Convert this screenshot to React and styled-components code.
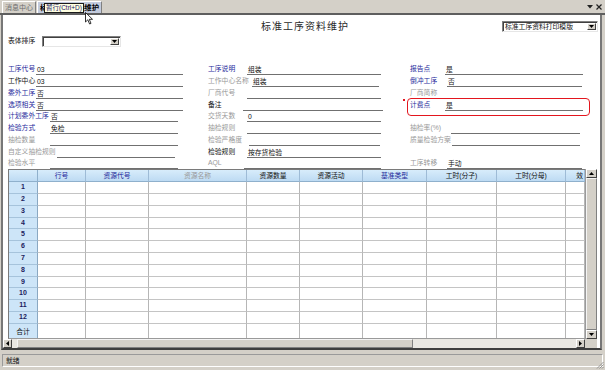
import styled, { createGlobalStyle } from 'styled-components';

const GlobalStyle = createGlobalStyle`
  html, body {
    margin: 0;
    padding: 0;
    background: #d4d0c8;
  }

  body {
    font-family: "Liberation Sans", "Noto Sans CJK SC", sans-serif;
  }

  * {
    box-sizing: border-box;
  }
`;

const toneColors = {
  blue: '#1f2a9c',
  black: '#111111',
  gray: '#999999',
};

// off = distance from column start to the underline, w = underline width
const leftFields = [
  { label: '工序代号', tone: 'blue', value: '03', off: 28, w: 147 },
  { label: '工作中心', tone: 'black', value: '03', off: 28, w: 147 },
  { label: '委外工序', tone: 'blue', value: '否', off: 28, w: 147 },
  { label: '选项相关', tone: 'blue', value: '否', off: 28, w: 147 },
  { label: '计划委外工序', tone: 'blue', value: '否', off: 42, w: 128 },
  { label: '检验方式', tone: 'blue', value: '免检', off: 42, w: 128 },
  { label: '抽检数量', tone: 'gray', value: '', off: 42, w: 128 },
  { label: '自定义抽检规则', tone: 'gray', value: '', off: 49, w: 118 },
  { label: '检验水平', tone: 'gray', value: '', off: 42, w: 128 },
];

const middleFields = [
  { label: '工序说明', tone: 'blue', value: '组装', off: 39, w: 134 },
  { label: '工作中心名称', tone: 'gray', value: '组装', off: 44, w: 127 },
  { label: '厂商代号', tone: 'gray', value: '', off: 39, w: 134 },
  { label: '备注', tone: 'black', value: '', off: 35, w: 140 },
  { label: '交货天数', tone: 'gray', value: '0', off: 39, w: 134 },
  { label: '抽检规则', tone: 'gray', value: '', off: 39, w: 134 },
  { label: '检验严格度', tone: 'gray', value: '', off: 41, w: 131 },
  { label: '检验规则', tone: 'black', value: '按存货检验', off: 39, w: 134 },
  { label: 'AQL', tone: 'gray', value: '', off: 36, w: 137 },
];

const rightFields = [
  { label: '报告点', tone: 'blue', value: '是', off: 35, w: 138 },
  { label: '倒冲工序', tone: 'blue', value: '否', off: 37, w: 135 },
  { label: '厂商简称', tone: 'gray', value: '', off: 38, w: 134 },
  { label: '计费点', tone: 'blue', value: '是', off: 35, w: 138 },
  null,
  { label: '抽检率(%)', tone: 'gray', value: '', off: 41, w: 129 },
  { label: '质量检验方案', tone: 'gray', value: '', off: 42, w: 128 },
  null,
  { label: '工序转移', tone: 'gray', value: '手动', off: 37, w: 135 },
];

const columns = [
  { title: '行号', tone: 'blue', w: 48 },
  { title: '资源代号', tone: 'blue', w: 63 },
  { title: '资源名称', tone: 'gray', w: 98 },
  { title: '资源数量', tone: 'black', w: 53 },
  { title: '资源活动', tone: 'black', w: 63 },
  { title: '基准类型', tone: 'blue', w: 64 },
  { title: '工时(分子)', tone: 'black', w: 70 },
  { title: '工时(分母)', tone: 'black', w: 69 },
  { title: '效', tone: 'black', w: 19, edge: true },
];

const gridTemplate = `29px ${columns.map((c) => `${c.w}px`).join(' ')}`;
const rowNumbers = Array.from({ length: 12 }, (_, i) => i + 1);

const App = () => {
  const renderTabs = () => (
    <TabBar>
      <Tab>消息中心</Tab>
      <Tab $active>
        标准工序资料维护
        <Tooltip>暂行(Ctrl+D)</Tooltip>
      </Tab>
      <Cursor viewBox="0 0 9 13">
        <path d="M0.5 0.5 L0.5 10 L2.8 7.8 L4.6 12 L6 11.4 L4.3 7.3 L7.5 7.3 Z" fill="#fff" stroke="#000" strokeWidth="0.8" />
      </Cursor>
      <TabTools>
        <svg width="6" height="4" viewBox="0 0 6 4"><path d="M0 0 H6 L3 3.5 Z" fill="#222" /></svg>
        <svg width="6" height="6" viewBox="0 0 6 6"><path d="M0.5 0.5 L5.5 5.5 M5.5 0.5 L0.5 5.5" stroke="#222" strokeWidth="1.2" /></svg>
      </TabTools>
    </TabBar>
  );

  const renderCombo = (text, width) => (
    <Combo $w={width}>
      <ComboText>{text}</ComboText>
      <ComboButton>
        <svg width="5" height="3" viewBox="0 0 5 3"><path d="M0 0 H5 L2.5 3 Z" fill="#000" /></svg>
      </ComboButton>
    </Combo>
  );

  const renderHeader = () => (
    <Header>
      <TitleRow>
        <span />
        <Title>标准工序资料维护</Title>
        <PrintSlot>{renderCombo('标准工序资料打印模版', 96)}</PrintSlot>
      </TitleRow>
      <SortRow>
        <FieldLabel $tone="black">表体排序</FieldLabel>
        {renderCombo('', 79)}
      </SortRow>
    </Header>
  );

  const renderField = (field, i) => {
    if (!field) return <Blank key={`blank-${i}`} />;
    return (
      <Field key={field.label} $off={field.off} $w={field.w}>
        <FieldLabel $tone={field.tone}>{field.label}</FieldLabel>
        <FieldValue>{field.value}</FieldValue>
      </Field>
    );
  };

  const renderForm = () => (
    <Form>
      <FormColumn>{leftFields.map(renderField)}</FormColumn>
      <FormColumn>{middleFields.map(renderField)}</FormColumn>
      <FormColumn>
        {rightFields.map(renderField)}
        <Highlight />
        <Mark />
      </FormColumn>
    </Form>
  );

  const renderTable = () => (
    <Table>
      <CornerCell />
      {columns.map((c) => (
        <HeadCell key={c.title} $tone={c.tone} $edge={c.edge}>{c.title}</HeadCell>
      ))}
      {rowNumbers.map((n) => [
        <NumCell key={`n-${n}`}>{n}</NumCell>,
        ...columns.map((c) => <BodyCell key={`${n}-${c.title}`} />),
      ])}
      <FooterNum>合计</FooterNum>
      {columns.map((c) => <FooterCell key={`f-${c.title}`} />)}
    </Table>
  );

  const renderGrid = () => (
    <GridArea>
      <span />
      {renderTable()}
      <VScroll>
        <ScrollButton>
          <svg width="5" height="3" viewBox="0 0 5 3"><path d="M0 3 H5 L2.5 0 Z" fill="#000" /></svg>
        </ScrollButton>
        <ScrollThumb />
        <ScrollButton>
          <svg width="5" height="3" viewBox="0 0 5 3"><path d="M0 0 H5 L2.5 3 Z" fill="#000" /></svg>
        </ScrollButton>
      </VScroll>
      <HScroll>
        <ScrollButton>
          <svg width="3" height="5" viewBox="0 0 3 5"><path d="M3 0 V5 L0 2.5 Z" fill="#000" /></svg>
        </ScrollButton>
        <HThumb />
        <HTrack />
        <ScrollButton>
          <svg width="3" height="5" viewBox="0 0 3 5"><path d="M0 0 V5 L3 2.5 Z" fill="#000" /></svg>
        </ScrollButton>
      </HScroll>
      <ScrollCorner />
    </GridArea>
  );

  const renderStatus = () => (
    <StatusBar>
      <StatusText>就绪</StatusText>
      <Grip viewBox="0 0 8 8">
        <path d="M7.5 1 L1 7.5 M7.5 3.5 L3.5 7.5 M7.5 6 L6 7.5" stroke="#808080" strokeWidth="0.8" />
      </Grip>
    </StatusBar>
  );

  return (
    <Window>
      <GlobalStyle />
      {renderTabs()}
      <Panel>
        {renderHeader()}
        {renderForm()}
        {renderGrid()}
      </Panel>
      {renderStatus()}
    </Window>
  );
};

const Window = styled.div`
  background: #d4d0c8;
  height: 370px;
  overflow: hidden;
  position: relative;
  width: 605px;
`;

const TabBar = styled.div`
  align-items: flex-end;
  border-bottom: 2px solid #5e5e5e;
  display: flex;
  height: 15px;
  padding-left: 2px;
`;

const Tab = styled.div`
  background: ${(p) => (p.$active ? '#c3cbdd' : '#d4d0c8')};
  border-left: 1px solid #ffffff;
  border-right: 1px solid #808080;
  border-top: 1px solid #ffffff;
  color: ${(p) => (p.$active ? '#000000' : '#6e6e6e')};
  font-size: ${(p) => (p.$active ? '7.4px' : '7px')};
  font-weight: ${(p) => (p.$active ? 700 : 400)};
  height: 12px;
  line-height: 11px;
  margin-right: 1px;
  padding: 0 2px;
  position: relative;
  white-space: nowrap;
`;

const Tooltip = styled.div`
  background: #ffffe1;
  border: 1px solid #1a1a1a;
  color: #16166a;
  font-size: 6.5px;
  font-weight: 400;
  height: 10px;
  left: 6px;
  line-height: 8px;
  padding: 0 1px;
  position: absolute;
  top: 1px;
  white-space: nowrap;
`;

const Cursor = styled.svg`
  height: 13px;
  left: 85px;
  position: absolute;
  top: 12px;
  width: 9px;
`;

const TabTools = styled.div`
  align-items: center;
  align-self: center;
  display: flex;
  gap: 3px;
  margin-left: auto;
  margin-right: 3px;
`;

const Panel = styled.div`
  background: #ffffff;
  border-bottom: 2px solid #3e3e3e;
  border-left: 2px solid #777777;
  border-right: 2px solid #777777;
  display: flex;
  flex-direction: column;
  height: 335px;
  margin-left: 1px;
  width: 601px;
`;

const Header = styled.div`
  padding: 6px 2px 0 5px;
`;

const TitleRow = styled.div`
  align-items: center;
  display: grid;
  grid-template-columns: 1fr auto 1fr;
  height: 10px;
`;

const Title = styled.div`
  color: #2a2a2a;
  font-size: 10px;
  letter-spacing: 1px;
  line-height: 10px;
  padding-left: 4px;
`;

const PrintSlot = styled.div`
  display: flex;
  justify-content: flex-end;
`;

const SortRow = styled.div`
  align-items: center;
  display: grid;
  grid-template-columns: 34px 79px;
  height: 11px;
  margin-top: 5px;
`;

const Combo = styled.div`
  background: #ffffff;
  border: 1px solid;
  border-color: #7f7f7f #e6e6e6 #e6e6e6 #7f7f7f;
  box-shadow: inset 1px 1px 0 #404040;
  display: flex;
  height: 11px;
  padding: 1px 1px 1px 2px;
  width: ${(p) => p.$w}px;
`;

const ComboText = styled.span`
  color: #111111;
  flex: 1;
  font-size: 6.8px;
  line-height: 8px;
  overflow: hidden;
  white-space: nowrap;
`;

const ComboButton = styled.span`
  align-items: center;
  background: #d4d0c8;
  border: 1px solid;
  border-color: #ffffff #404040 #404040 #ffffff;
  display: flex;
  justify-content: center;
  width: 9px;
`;

const Form = styled.div`
  display: grid;
  grid-template-columns: 200px 202px 1fr;
  margin-top: 16.5px;
  padding-left: 5px;
`;

const FormColumn = styled.div`
  position: relative;
`;

const Field = styled.div`
  align-items: end;
  display: grid;
  grid-template-columns: ${(p) => p.$off}px ${(p) => p.$w}px;
  height: 11.75px;
`;

const Blank = styled.div`
  height: 11.75px;
`;

const FieldLabel = styled.span`
  color: ${(p) => toneColors[p.$tone]};
  font-size: 6.8px;
  line-height: 10px;
  padding-bottom: 1px;
  white-space: nowrap;
`;

const FieldValue = styled.span`
  border-bottom: 1px solid #707070;
  color: #111111;
  font-size: 6.8px;
  height: 10px;
  line-height: 9px;
  padding-left: 1px;
  white-space: nowrap;
`;

const Highlight = styled.div`
  border: 1.5px solid #e3161e;
  border-radius: 4px;
  height: 18px;
  left: -3px;
  position: absolute;
  top: 34.5px;
  width: 183px;
`;

const Mark = styled.div`
  background: #e3161e;
  height: 1.5px;
  left: -7px;
  position: absolute;
  top: 35.5px;
  width: 1.5px;
`;

const GridArea = styled.div`
  display: grid;
  grid-template-columns: 5px 577px 12px;
  grid-template-rows: 170px 9px;
`;

const Table = styled.div`
  border-bottom: 1px solid #9a9a9a;
  border-left: 1px solid #7a7a7a;
  border-top: 1px solid #7a7a7a;
  display: grid;
  grid-template-columns: ${gridTemplate};
  grid-template-rows: 12px repeat(12, 11.8px) 1fr;
  overflow: hidden;
`;

const CornerCell = styled.div`
  background: linear-gradient(#d8ecfb, #bddbf3);
  border-bottom: 1px solid #8fb0cc;
  border-right: 1px solid #8fb0cc;
`;

const HeadCell = styled.div`
  background: linear-gradient(#d8ecfb, #bddbf3);
  border-bottom: 1px solid #8fb0cc;
  border-right: 1px solid #9ebbd6;
  color: ${(p) => toneColors[p.$tone]};
  font-size: 6.8px;
  line-height: 11px;
  padding-right: ${(p) => (p.$edge ? '1px' : '0')};
  text-align: ${(p) => (p.$edge ? 'right' : 'center')};
  white-space: nowrap;
`;

const NumCell = styled.div`
  background: #cde5f8;
  border-bottom: 1px solid #a6c3db;
  border-right: 1px solid #8aa8c2;
  color: #1b1b5e;
  font-size: 7px;
  font-weight: 700;
  line-height: 10.5px;
  text-align: center;
`;

const BodyCell = styled.div`
  background: #ffffff;
  border-bottom: 1px solid #c4c4c4;
  border-right: 1px solid #b6b6b6;
`;

const FooterNum = styled.div`
  align-items: flex-end;
  background: #cde5f8;
  border-right: 1px solid #8aa8c2;
  color: #111111;
  display: flex;
  font-size: 6.8px;
  justify-content: center;
  line-height: 8px;
  padding-bottom: 2px;
`;

const FooterCell = styled.div`
  background: #ffffff;
  border-right: 1px solid #b6b6b6;
`;

const VScroll = styled.div`
  background: #e9e7e2;
  border-left: 1px solid #9a9a9a;
  display: flex;
  flex-direction: column;
`;

const ScrollButton = styled.span`
  align-items: center;
  background: #d4d0c8;
  border: 1px solid;
  border-color: #ffffff #404040 #404040 #ffffff;
  display: flex;
  flex: 0 0 9px;
  height: 9px;
  justify-content: center;
`;

const ScrollThumb = styled.span`
  background: #d4d0c8;
  border: 1px solid;
  border-color: #f4f4f4 #808080 #808080 #f4f4f4;
  flex: 1;
`;

const HScroll = styled.div`
  background: #e9e7e2;
  display: flex;
  grid-column: 1 / 3;
  height: 9px;
`;

const HThumb = styled.span`
  background: #d4d0c8;
  border: 1px solid;
  border-color: #f4f4f4 #808080 #808080 #f4f4f4;
  margin-left: 5px;
  width: 396px;
`;

const HTrack = styled.span`
  flex: 1;
`;

const ScrollCorner = styled.span`
  background: #d4d0c8;
`;

const StatusBar = styled.div`
  align-items: center;
  display: flex;
  height: 20px;
  padding: 3px 2px 2px 2px;
  position: relative;
`;

const StatusText = styled.div`
  border: 1px solid;
  border-color: #9a9a9a #ffffff #ffffff #9a9a9a;
  color: #111111;
  flex: 1;
  font-size: 6.8px;
  height: 13px;
  line-height: 11px;
  padding-left: 3px;
`;

const Grip = styled.svg`
  bottom: 1px;
  height: 8px;
  position: absolute;
  right: 1px;
  width: 8px;
`;

export default App;
